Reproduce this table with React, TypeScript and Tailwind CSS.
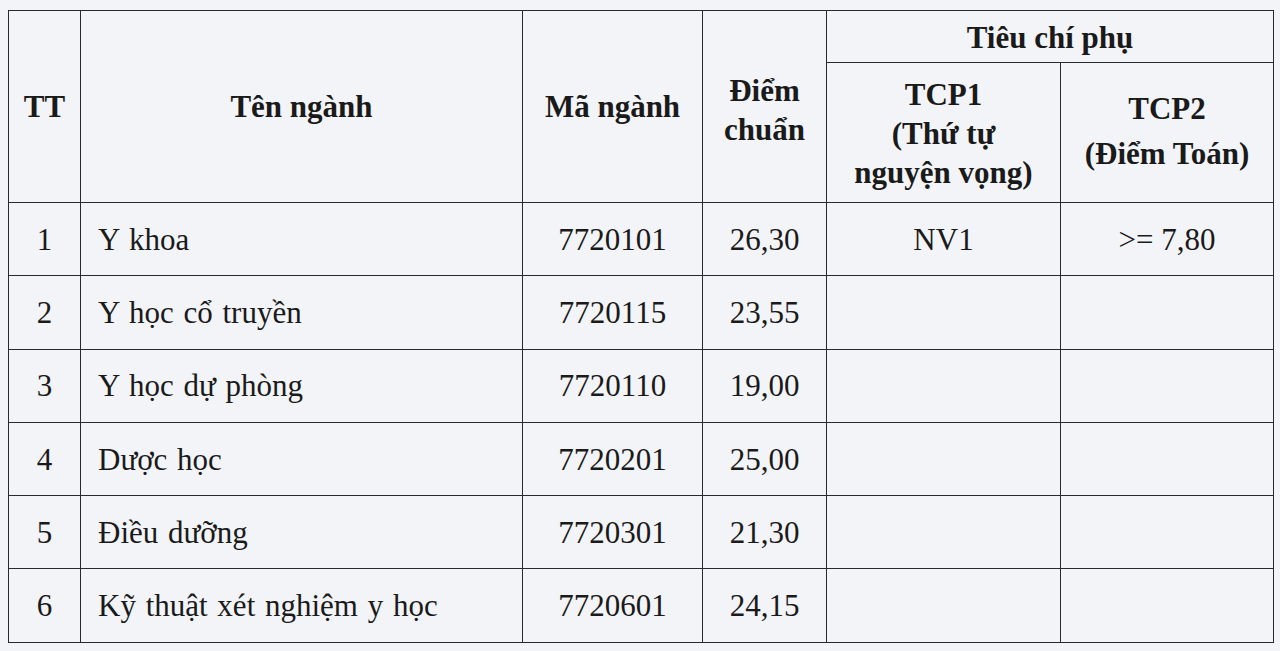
import React from "react";

const rows = [
  { tt: "1", name: "Y khoa", code: "7720101", score: "26,30", t1: "NV1", t2: ">= 7,80" },
  { tt: "2", name: "Y học cổ truyền", code: "7720115", score: "23,55", t1: "", t2: "" },
  { tt: "3", name: "Y học dự phòng", code: "7720110", score: "19,00", t1: "", t2: "" },
  { tt: "4", name: "Dược học", code: "7720201", score: "25,00", t1: "", t2: "" },
  { tt: "5", name: "Điều dưỡng", code: "7720301", score: "21,30", t1: "", t2: "" },
  { tt: "6", name: "Kỹ thuật xét nghiệm y học", code: "7720601", score: "24,15", t1: "", t2: "" },
];

export default function App() {
  const cell = "border-[1.5px] border-[#2a2a2a] p-0";
  return (
    <div
      className="w-[1280px] h-[651px] bg-[#f3f4f7] overflow-hidden pt-[10px] pl-[8px] text-[#1a1a1a]"
      style={{ fontFamily: '"Liberation Serif", "Times New Roman", serif' }}
    >
      <table className="table-fixed border-collapse w-[1265px] text-[31px] leading-[39px]">
        <colgroup>
          <col className="w-[72px]" />
          <col className="w-[442px]" />
          <col className="w-[180px]" />
          <col className="w-[124px]" />
          <col className="w-[234px]" />
          <col className="w-[213px]" />
        </colgroup>
        <thead className="font-bold">
          <tr className="h-[52px]">
            <th rowSpan={2} className={`${cell} text-center align-middle`}>TT</th>
            <th rowSpan={2} className={`${cell} text-center align-middle`}>Tên ngành</th>
            <th rowSpan={2} className={`${cell} text-center align-middle`}>Mã ngành</th>
            <th rowSpan={2} className={`${cell} text-center align-middle`}>
              <div className="pt-[6px]">Điểm<br />chuẩn</div>
            </th>
            <th colSpan={2} className={`${cell} text-center align-middle`}>
              <div className="pt-[2px]">Tiêu chí phụ</div>
            </th>
          </tr>
          <tr className="h-[140px]">
            <th className={`${cell} text-center align-middle`}>
              <div className="pt-[2px]">TCP1<br />(Thứ tự<br />nguyện vọng)</div>
            </th>
            <th className="border-[1.5px] border-[#2a2a2a] border-l-[#9a9a9a] text-center align-middle p-0">
              <div className="pb-[4px] leading-[45px]">TCP2<br />(Điểm Toán)</div>
            </th>
          </tr>
        </thead>
        <tbody className="font-normal">
          {rows.map((r) => (
            <tr key={r.tt} className="h-[73.3px]">
              <td className={`${cell} text-center`}>{r.tt}</td>
              <td className={`${cell} text-left pl-[17px] [word-spacing:2px]`}>{r.name}</td>
              <td className={`${cell} text-center`}>{r.code}</td>
              <td className={`${cell} text-center`}>{r.score}</td>
              <td className={`${cell} text-center`}>{r.t1}</td>
              <td className={`${cell} text-center`}>{r.t2}</td>
            </tr>
          ))}
        </tbody>
      </table>
    </div>
  );
}
